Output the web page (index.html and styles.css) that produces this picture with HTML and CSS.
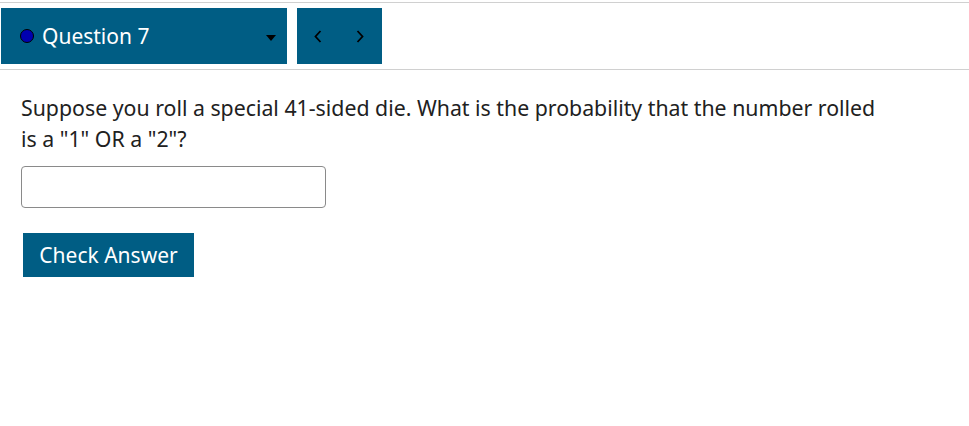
FILE: index.html
```html
<!DOCTYPE html>
<html lang="en">
<head>
    <meta charset="UTF-8">
    <meta name="viewport" content="width=device-width, initial-scale=1.0">
    <title>Question 7</title>
    <link rel="stylesheet" href="styles.css">
</head>
<body>
    <div id="nav">
        <div id="picker">
            <span class="dot"></span>
            <span id="picker-label">Question 7</span>
            <span class="caret"></span>
        </div>
        <div id="arrows">
            <svg width="8" height="13" viewBox="0 0 8 13"><path d="M6.5 1 L1.5 6.5 L6.5 12" fill="none" stroke="#000" stroke-width="1.8"/></svg>
            <svg width="8" height="13" viewBox="0 0 8 13"><path d="M1.5 1 L6.5 6.5 L1.5 12" fill="none" stroke="#000" stroke-width="1.8"/></svg>
        </div>
    </div>

    <div id="question">
        <p id="question-text">Suppose you roll a special 41-sided die. What is the probability that the number rolled is a "1" OR a "2"?</p>
        <input type="text" id="answer">
        <div>
            <button id="check">Check Answer</button>
        </div>
    </div>
</body>
</html>
```

FILE: styles.css
```css
body{
    margin: 0px;
    font-family: "Noto Sans", "Open Sans", sans-serif;
    color: #212121;
    background-color: white;
}
#nav{
    margin-top: 2px;
    border-top: 1px solid #d0d0d0;
    border-bottom: 1px solid #d0d0d0;
    padding: 5px 1px;
    display: flex;
    gap: 10px;
}
#picker{
    width: 286px;
    height: 56px;
    background-color: #005d84;
    display: flex;
    align-items: center;
    box-sizing: border-box;
    padding-left: 19px;
}
.dot{
    width: 12px;
    height: 12px;
    border-radius: 50%;
    background-color: #0000b0;
    border: 1px solid #000;
    margin-right: 8px;
}
#picker-label{
    color: white;
    font-size: 21px;
    flex: 1;
}
.caret{
    width: 0;
    height: 0;
    border-left: 5px solid transparent;
    border-right: 5px solid transparent;
    border-top: 6px solid #000;
    margin-right: 11px;
    margin-top: 3px;
}
#arrows{
    width: 85px;
    height: 56px;
    background-color: #005d84;
    display: flex;
    align-items: center;
    justify-content: space-between;
    box-sizing: border-box;
    padding: 0 18px 0 17px;
}
#question{
    padding: 22px 21px;
}
#question-text{
    margin: 0 0 12px 0;
    font-size: 21.3px;
    line-height: 31px;
    max-width: 870px;
}
#answer{
    width: 305px;
    height: 42px;
    box-sizing: border-box;
    border: 1px solid #8a8a8a;
    border-radius: 4px;
    margin: 0;
    display: block;
}
#check{
    margin-top: 25px;
    margin-left: 2px;
    background-color: #005d84;
    color: white;
    border: none;
    font-family: "Noto Sans", "Open Sans", sans-serif;
    font-size: 21px;
    width: 171px;
    height: 44px;
    padding: 0;
    border-radius: 0;
}
```
